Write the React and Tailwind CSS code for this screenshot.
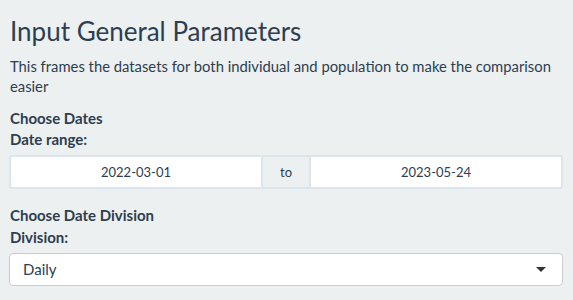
export default function App() {
  return (
    <div
      className="w-[573px] h-[300px] bg-[#ecf0f1] text-[#2c3e50] pl-[9px] pr-[10px] overflow-hidden"
      style={{ fontFamily: "Lato, 'Noto Sans', sans-serif" }}
    >
      <h3 className="text-[26px] leading-[28.6px] font-normal pt-[17px] pl-px">Input General Parameters</h3>
      <p className="text-[14.8px] leading-[20.6px] mt-[10px] pl-px">
        This frames the datasets for both individual and population to make the comparison easier
      </p>
      <div className="mt-[11px] pl-px text-[15px] leading-[21px] font-bold">Choose Dates</div>
      <div className="pl-px text-[15px] leading-[21px] font-bold">Date range:</div>
      <div className="mt-[5px] flex h-[34px] text-[13px]">
        <div className="flex-1 flex items-center justify-center pt-px bg-white border-2 border-[#dce4ec] rounded-l-[3px]">
          2022-03-01
        </div>
        <div className="w-[50px] -ml-[2px] flex items-center justify-center pt-px bg-[#ecf0f1] border-2 border-[#dce4ec]">
          to
        </div>
        <div className="flex-1 -ml-[2px] flex items-center justify-center pt-px bg-white border-2 border-[#dce4ec] rounded-r-[3px]">
          2023-05-24
        </div>
      </div>
      <div className="mt-[15px] pl-px text-[15px] leading-[22px] font-bold">Choose Date Division</div>
      <div className="pl-px text-[15px] leading-[22px] font-bold">Division:</div>
      <div className="mt-[5px] h-[33px] flex items-center justify-between bg-white border border-[#cccccc] rounded-[4px] pl-[13px] pr-[16px] text-[15px]">
        <span>Daily</span>
        <svg width="10" height="5" viewBox="0 0 10 5" className="mt-[1px]">
          <path d="M0 0 L10 0 L5 5 Z" fill="#333" />
        </svg>
      </div>
    </div>
  );
}
